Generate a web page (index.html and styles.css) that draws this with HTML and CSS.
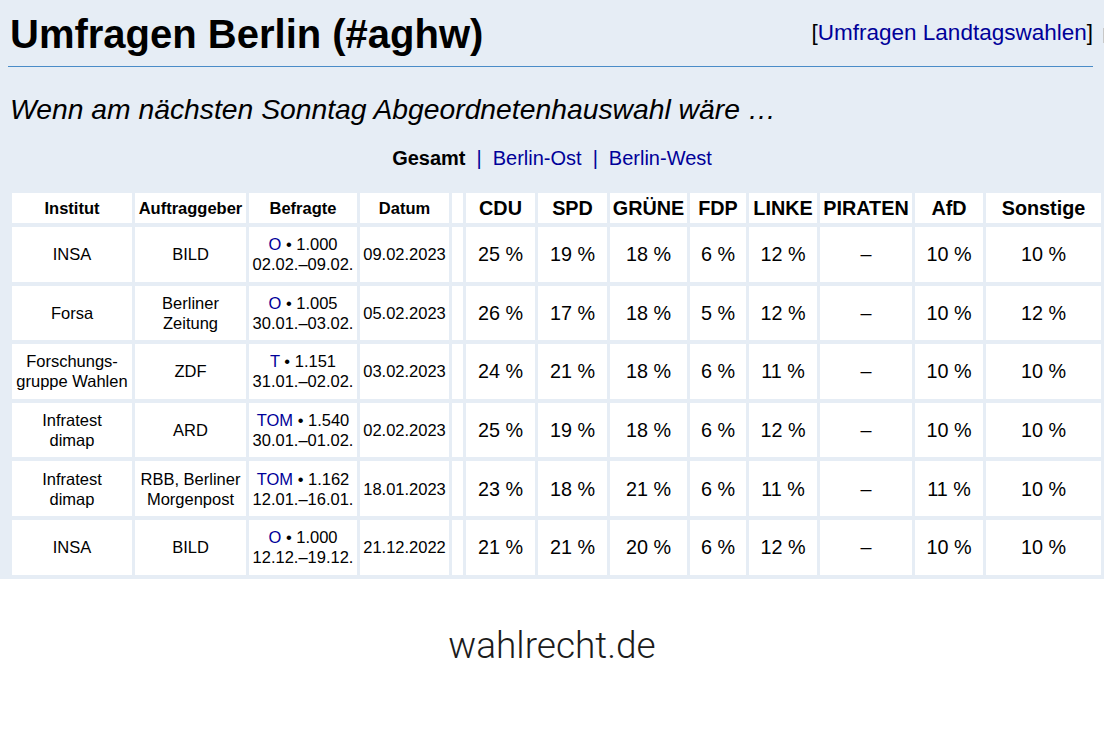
FILE: index.html
```html
<!DOCTYPE html>
<html lang="de">
<head>
<meta charset="utf-8">
<title>Umfragen Berlin</title>
<link rel="stylesheet" href="styles.css">
</head>
<body>
<div class="page">
  <div class="top">
    <div class="head">
      <h1 class="title">Umfragen Berlin (#aghw)</h1>
      <div class="crumb">[<a href="#">Umfragen Landtagswahlen</a>]</div>
    </div>
    <div class="edge"></div>
  </div>
  <p class="lead">Wenn am nächsten Sonntag Abgeordnetenhauswahl wäre …</p>
  <nav class="tabs">
    <b>Gesamt</b><span class="sep">|</span><a href="#">Berlin-Ost</a><span class="sep">|</span><a href="#">Berlin-West</a>
  </nav>
  <table class="polls">
    <colgroup>
      <col class="c-inst"><col class="c-auf"><col class="c-bef"><col class="c-dat"><col class="c-gap">
      <col class="c-cdu"><col class="c-spd"><col class="c-gru"><col class="c-fdp"><col class="c-lin">
      <col class="c-pir"><col class="c-afd"><col class="c-son">
    </colgroup>
    <thead>
      <tr>
        <th>Institut</th><th>Auftraggeber</th><th>Befragte</th><th>Datum</th><th class="gap"></th>
        <th class="p">CDU</th><th class="p">SPD</th><th class="p">GRÜNE</th><th class="p">FDP</th><th class="p">LINKE</th><th class="p">PIRATEN</th><th class="p">AfD</th><th class="p">Sonstige</th>
      </tr>
    </thead>
    <tbody>
      <tr>
        <td>INSA</td><td>BILD</td><td><a href="#">O</a> • 1.000<br>02.02.–09.02.</td><td>09.02.2023</td><td class="gap"></td>
        <td class="p">25 %</td><td class="p">19 %</td><td class="p">18 %</td><td class="p">6 %</td><td class="p">12 %</td><td class="p">–</td><td class="p">10 %</td><td class="p">10 %</td>
      </tr>
      <tr>
        <td>Forsa</td><td>Berliner<br>Zeitung</td><td><a href="#">O</a> • 1.005<br>30.01.–03.02.</td><td>05.02.2023</td><td class="gap"></td>
        <td class="p">26 %</td><td class="p">17 %</td><td class="p">18 %</td><td class="p">5 %</td><td class="p">12 %</td><td class="p">–</td><td class="p">10 %</td><td class="p">12 %</td>
      </tr>
      <tr>
        <td>Forschungs-<br>gruppe Wahlen</td><td>ZDF</td><td><a href="#">T</a> • 1.151<br>31.01.–02.02.</td><td>03.02.2023</td><td class="gap"></td>
        <td class="p">24 %</td><td class="p">21 %</td><td class="p">18 %</td><td class="p">6 %</td><td class="p">11 %</td><td class="p">–</td><td class="p">10 %</td><td class="p">10 %</td>
      </tr>
      <tr>
        <td>Infratest<br>dimap</td><td>ARD</td><td><a href="#">TOM</a> • 1.540<br>30.01.–01.02.</td><td>02.02.2023</td><td class="gap"></td>
        <td class="p">25 %</td><td class="p">19 %</td><td class="p">18 %</td><td class="p">6 %</td><td class="p">12 %</td><td class="p">–</td><td class="p">10 %</td><td class="p">10 %</td>
      </tr>
      <tr>
        <td>Infratest<br>dimap</td><td>RBB, Berliner<br>Morgenpost</td><td><a href="#">TOM</a> • 1.162<br>12.01.–16.01.</td><td>18.01.2023</td><td class="gap"></td>
        <td class="p">23 %</td><td class="p">18 %</td><td class="p">21 %</td><td class="p">6 %</td><td class="p">11 %</td><td class="p">–</td><td class="p">11 %</td><td class="p">10 %</td>
      </tr>
      <tr>
        <td>INSA</td><td>BILD</td><td><a href="#">O</a> • 1.000<br>12.12.–19.12.</td><td>21.12.2022</td><td class="gap"></td>
        <td class="p">21 %</td><td class="p">21 %</td><td class="p">20 %</td><td class="p">6 %</td><td class="p">12 %</td><td class="p">–</td><td class="p">10 %</td><td class="p">10 %</td>
      </tr>
    </tbody>
  </table>
</div>
<footer class="brand">wahlrecht.de</footer>
</body>
</html>
```
FILE: styles.css
```css
html, body {
  margin: 0;
  padding: 0;
  overflow: hidden;
}
body {
  background: #ffffff;
  color: #000000;
  font-family: "Liberation Sans", Arial, sans-serif;
}
a {
  color: #000099;
  text-decoration: none;
}
.page {
  background: #e6edf5;
  padding: 0 8px;
}
.top {
  display: flex;
  margin-right: -8px;
}
.head {
  flex: 1;
  display: flex;
  justify-content: space-between;
  align-items: flex-start;
  padding: 11px 0 9px;
  border-bottom: 1px solid #4a8cc8;
}
.edge {
  width: 1px;
  height: 15px;
  margin: 28px 0 0 10px;
  background: #c8c8c8;
}
.title {
  margin: 0 0 0 2px;
  font-size: 40px;
  line-height: 46px;
  font-weight: bold;
}
.crumb {
  margin-top: 9px;
  font-size: 22.5px;
  line-height: 25px;
}
.lead {
  margin: 26px 0 0 2px;
  font-size: 28.3px;
  line-height: 32px;
  font-style: italic;
}
.tabs {
  margin-top: 22px;
  text-align: center;
  font-size: 20px;
  line-height: 23px;
}
.tabs .sep {
  color: #000099;
  margin: 0 11px;
}
.polls {
  margin: 19px 0 0 1px;
  width: 1095px;
  table-layout: fixed;
  border-collapse: separate;
  border-spacing: 3px 4px;
}
.c-inst { width: 120px; }
.c-auf { width: 111px; }
.c-bef { width: 108px; }
.c-dat { width: 89px; }
.c-gap { width: 11px; }
.c-cdu { width: 69px; }
.c-spd { width: 69px; }
.c-gru { width: 77px; }
.c-fdp { width: 56px; }
.c-lin { width: 68px; }
.c-pir { width: 92px; }
.c-afd { width: 68px; }
.c-son { width: 115px; }
.polls th,
.polls td {
  background: #ffffff;
  padding: 0;
  text-align: center;
  vertical-align: middle;
  white-space: nowrap;
  overflow: hidden;
}
.polls th {
  height: 30px;
  font-size: 16.5px;
  line-height: 20px;
  font-weight: bold;
}
.polls td {
  height: 54.6px;
  font-size: 16.5px;
  line-height: 20px;
}
.polls .p {
  font-size: 19.8px;
}
.brand {
  margin-top: 46px;
  text-align: center;
  font-family: Roboto, "DejaVu Sans", sans-serif;
  font-weight: 300;
  font-size: 37px;
  line-height: 41px;
  color: #1b1b1b;
}
```
